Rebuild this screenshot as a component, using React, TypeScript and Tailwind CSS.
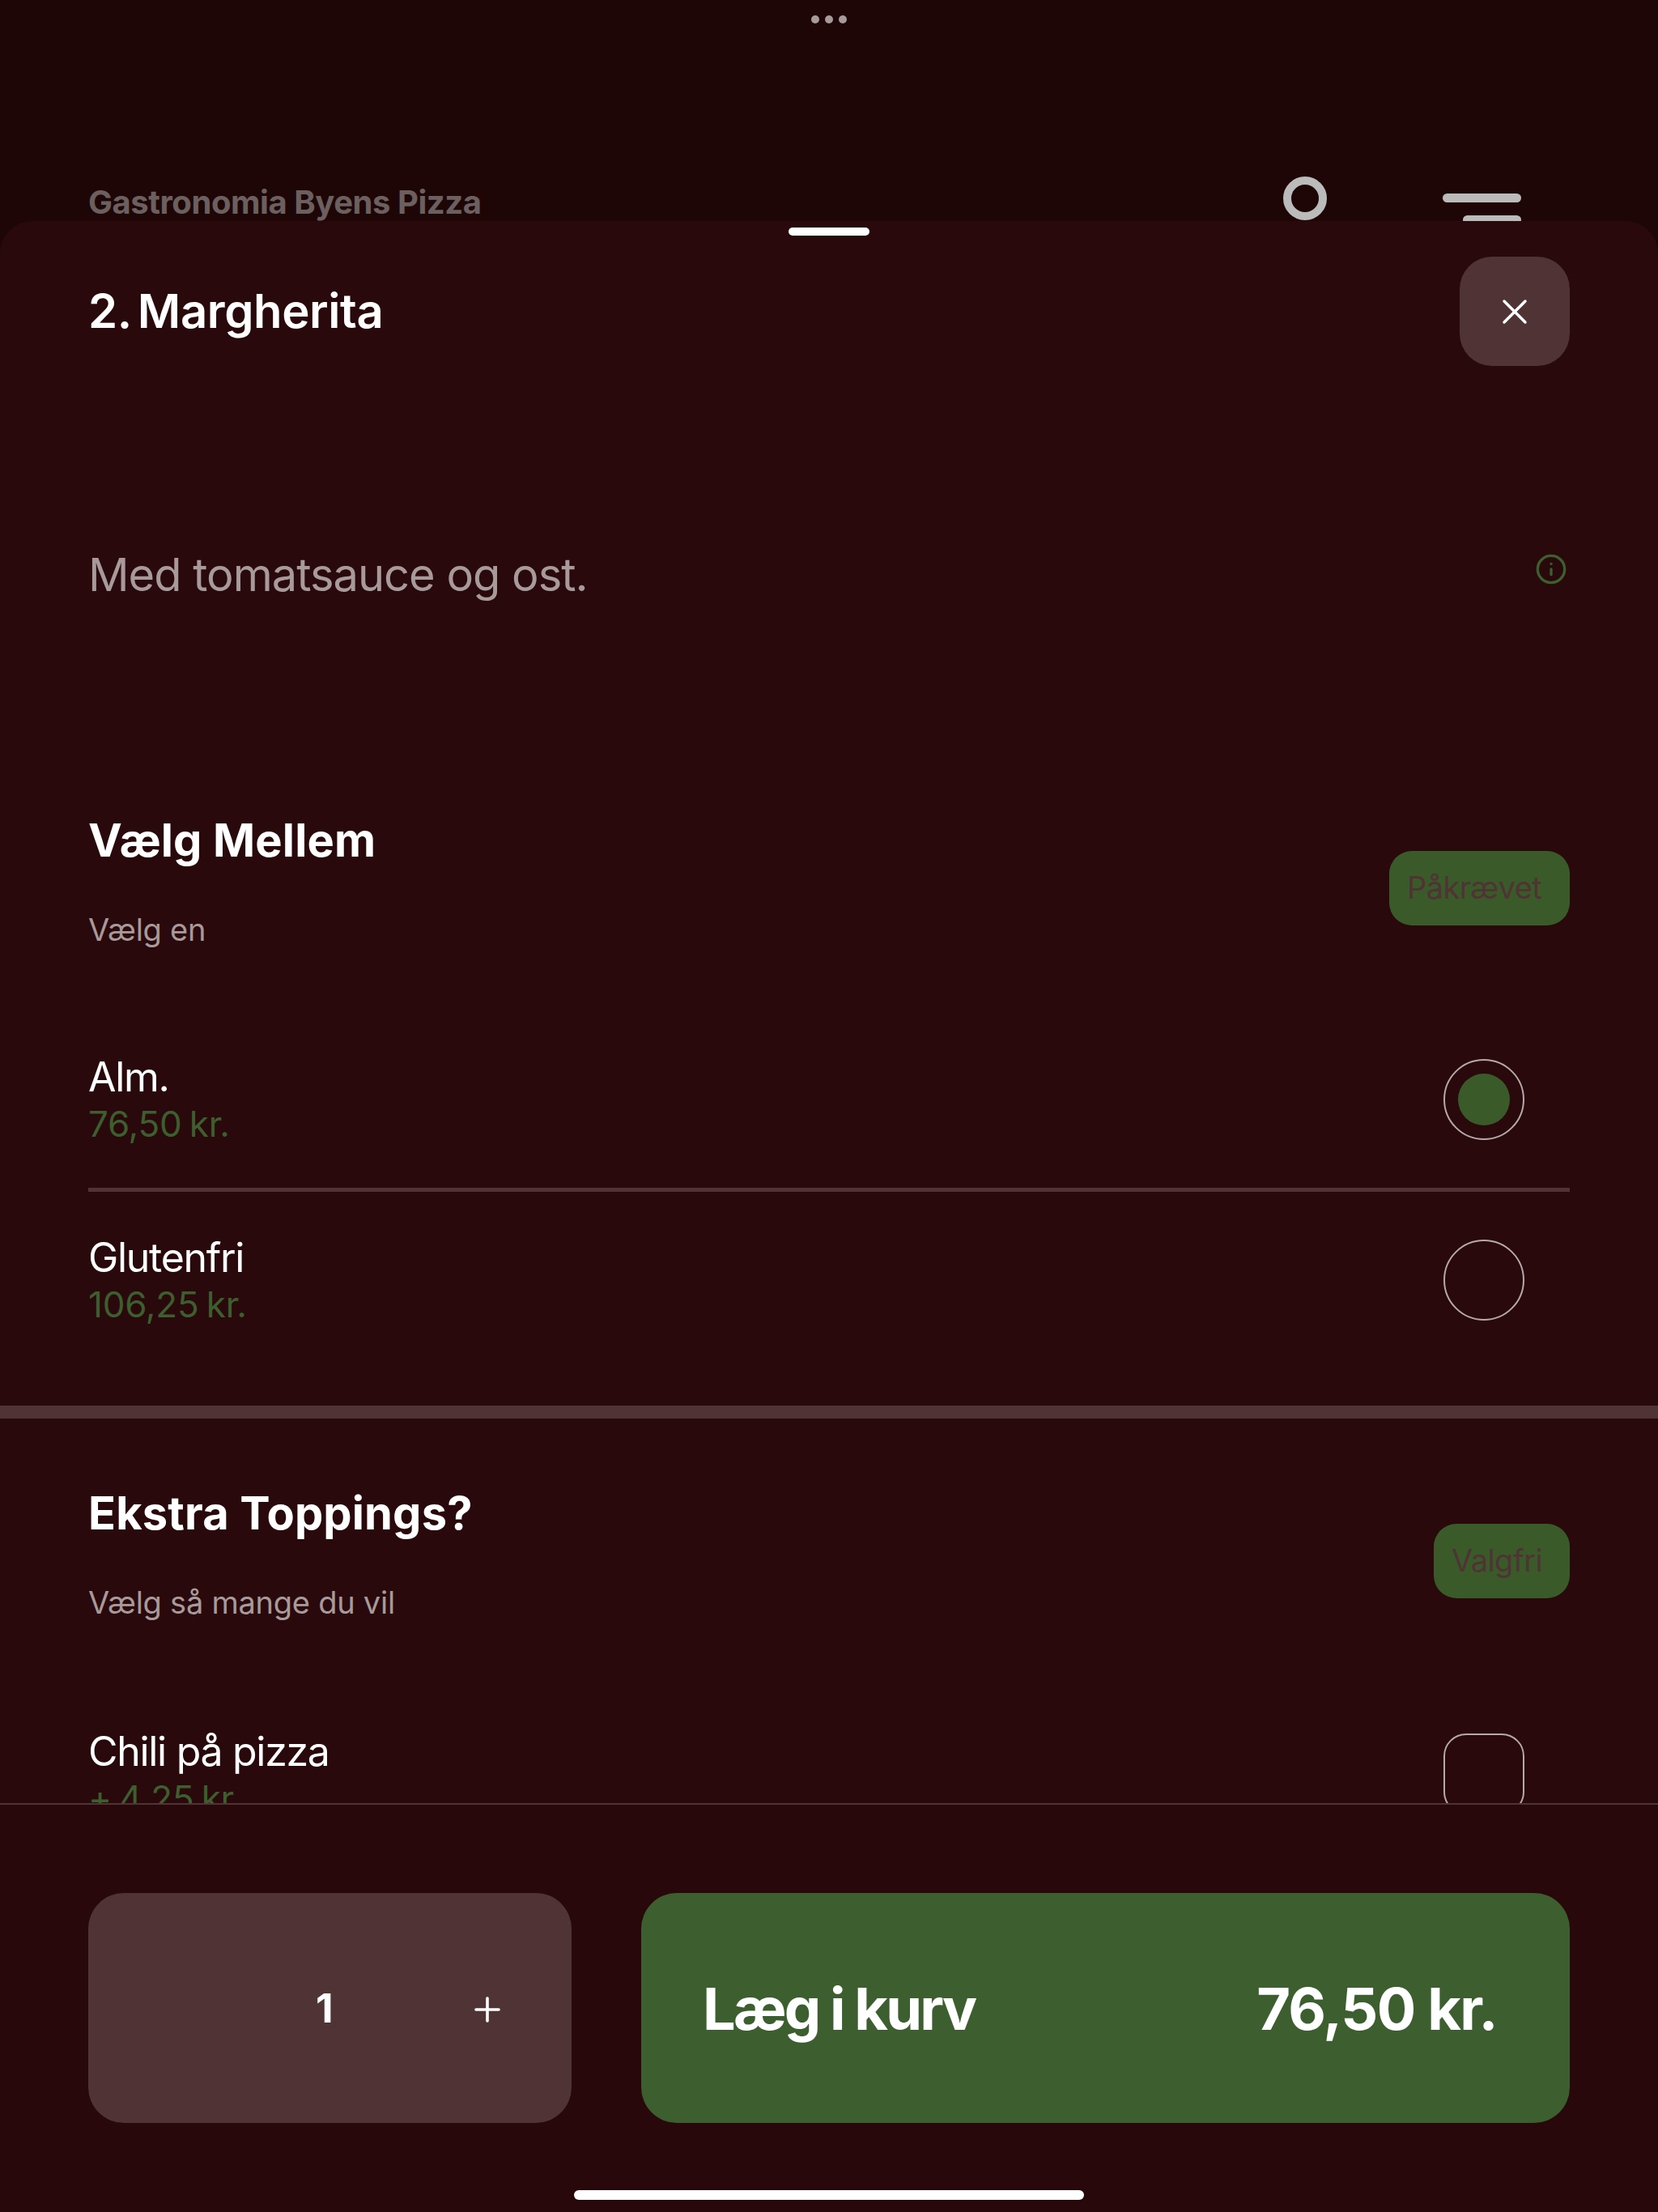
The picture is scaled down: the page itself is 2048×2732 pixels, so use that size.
import { Info, Plus, X } from "lucide-react";

function Option({ name, price, selected, square, divider }: { name: string; price: string; selected?: boolean; square?: boolean; divider?: boolean }) {
  return (
    <div className={`flex items-center justify-between pr-[56px] pt-[52px] ${divider ? "pb-[50px] border-b-[5px] border-[#4f3335]" : "pb-[52px]"}`}>
      <div>
        <div className="text-[50px] leading-[58px] tracking-[-1.3px] text-white">{name}</div>
        <div className="text-[44px] leading-[58px] tracking-[-0.2px] [word-spacing:-3px] text-[#3d5e2e]">{price}</div>
      </div>
      <div className={`w-[100px] h-[100px] -mt-[2px] border-[2px] border-[#b5a9aa] flex items-center justify-center ${square ? "rounded-[28px]" : "rounded-full"}`}>
        {selected && <div className="w-[64px] h-[64px] rounded-full bg-[#3a5a29]" />}
      </div>
    </div>
  );
}

function GroupHeader({ title, sub, badge, badgeWidth }: { title: string; sub: string; badge: string; badgeWidth: string }) {
  return (
    <div className="flex items-center justify-between">
      <div>
        <h2 className="text-[56px] leading-[68px] font-bold tracking-[0.15px] text-white">{title}</h2>
        <p className="mt-[52px] text-[38px] leading-[48px] tracking-[-0.25px] text-[#a89a9a]">{sub}</p>
      </div>
      <span className={`${badgeWidth} h-[92px] mt-[17px] pl-[22px] flex items-center rounded-[28px] bg-[#3a5a29] text-[38px] tracking-[-0.6px] text-[#4f3335]`}>{badge}</span>
    </div>
  );
}

export default function App() {
  return (
    <div className="w-[2048px] h-[2732px] overflow-hidden flex flex-col bg-[#1e0607] font-['Inter',sans-serif]">
      {/* page behind the sheet */}
      <div className="h-[273px] shrink-0 overflow-hidden px-[109px]">
        <div className="flex justify-center items-center gap-[7px] pt-[19px]">
          <span className="w-[10px] h-[10px] rounded-full bg-[#a89a9a]" />
          <span className="w-[10px] h-[10px] rounded-full bg-[#a89a9a]" />
          <span className="w-[10px] h-[10px] rounded-full bg-[#a89a9a]" />
        </div>
        <div className="flex items-start justify-between mt-[189px]">
          <span className="mt-[7px] text-[40px] leading-[50px] font-bold tracking-[-0.45px] text-[#6b5f60]">Gastronomia Byens Pizza</span>
          <div className="flex items-start">
            <div className="w-[54px] h-[54px] rounded-full border-[10px] border-[#bbbbbb]" />
            <div className="ml-[143px] mr-[60px] mt-[21px] flex flex-col items-end gap-[16px]">
              <span className="w-[97px] h-[11px] rounded-full bg-[#bbbbbb]" />
              <span className="w-[72px] h-[11px] rounded-full bg-[#bbbbbb]" />
            </div>
          </div>
        </div>
      </div>

      {/* sheet */}
      <div className="relative flex-1 min-h-0 flex flex-col rounded-t-[40px] bg-[#29090b]">
        <div className="absolute left-[974px] top-[8px] w-[100px] h-[10px] rounded-full bg-white" />

        <div className="flex-1 min-h-0 overflow-hidden">
          <div className="px-[109px] pt-[44px]">
            <div className="flex items-center justify-between h-[135px]">
              <h1 className="-mt-[2px] text-[58px] leading-[68px] font-semibold tracking-[-0.4px] [word-spacing:-6px] text-white">2. Margherita</h1>
              <button className="w-[136px] h-[135px] rounded-[40px] bg-[#4f3335] flex items-center justify-center">
                <X size={52} strokeWidth={1.6} color="#ffffff" />
              </button>
            </div>
            <div className="flex items-center justify-between mt-[220px]">
              <p className="text-[56px] leading-[76px] tracking-[-1px] text-[#a89a9a]">Med tomatsauce og ost.</p>
              <Info size={40} strokeWidth={2} color="#3d5e2e" className="mr-[3px] -mt-[14px]" />
            </div>
            <div className="mt-[256px]">
              <GroupHeader title="Vælg Mellem" sub="Vælg en" badge="Påkrævet" badgeWidth="w-[223px]" />
            </div>
            <div className="mt-[77px]">
              <Option name="Alm." price="76,50 kr." selected divider />
              <Option name="Glutenfri" price="106,25 kr." />
            </div>
          </div>
          <div className="h-[16px] mt-[44px] bg-[#4f3335]" />
          <div className="px-[109px] pt-[83px]">
            <GroupHeader title="Ekstra Toppings?" sub="Vælg så mange du vil" badge="Valgfri" badgeWidth="w-[168px]" />
            <div className="mt-[79px]">
              <Option name="Chili på pizza" price="+ 4,25 kr." square />
            </div>
          </div>
        </div>

        {/* footer */}
        <div className="shrink-0 h-[505px] border-t-[2px] border-[#4f3335] bg-[#28080a] px-[109px] pt-[109px] relative">
          <div className="flex gap-[86px] h-[284px]">
            <div className="w-[597px] rounded-[44px] bg-[#4f3335] relative flex items-center">
              <span className="ml-[281px] text-[50px] font-bold text-white">1</span>
              <Plus size={48} strokeWidth={1.8} color="#ffffff" className="ml-[166px] mt-[3px]" />
            </div>
            <button className="flex-1 rounded-[44px] bg-[#3d5e2e] flex items-center justify-between pl-[76px] pr-[90px] text-[72px] font-bold text-white">
              <span className="mt-[2px] tracking-[-2.7px] [word-spacing:-1px]">Læg i kurv</span>
              <span className="mt-[2px] tracking-[-1.6px]">76,50 kr.</span>
            </button>
          </div>
          <div className="absolute left-[709px] top-[476px] w-[630px] h-[12px] rounded-full bg-white" />
        </div>
      </div>
    </div>
  );
}
